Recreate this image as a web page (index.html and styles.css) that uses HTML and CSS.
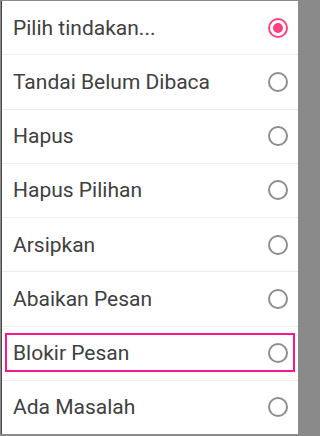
FILE: index.html
```html
<!DOCTYPE html>
<html>
<head>
<meta charset="utf-8">
<link rel="stylesheet" href="styles.css">
</head>
<body>
<div class="sheet">
  <div class="row"><span class="label">Pilih tindakan...</span><span class="radio on"></span></div>
  <div class="row"><span class="label">Tandai Belum Dibaca</span><span class="radio"></span></div>
  <div class="row"><span class="label">Hapus</span><span class="radio"></span></div>
  <div class="row"><span class="label">Hapus Pilihan</span><span class="radio"></span></div>
  <div class="row"><span class="label">Arsipkan</span><span class="radio"></span></div>
  <div class="row"><span class="label">Abaikan Pesan</span><span class="radio"></span></div>
  <div class="row marked"><span class="label">Blokir Pesan</span><span class="radio"></span><span class="mark"></span></div>
  <div class="row last"><span class="label">Ada Masalah</span><span class="radio"></span></div>
</div>
</body>
</html>
```
FILE: styles.css
```css
html, body {
  margin: 0;
  padding: 0;
}
body {
  width: 300px;
  height: 436px;
  background: #8a8a8a;
  overflow: hidden;
  font-family: Roboto, "Noto Sans", sans-serif;
}
.sheet {
  margin: 1px 2px 0 2px;
  height: 433px;
  background: #ffffff;
  display: flex;
  flex-direction: column;
  box-shadow: -1px 0 0 #4a4a4a;
}
.row {
  position: relative;
  flex: 1 1 0;
  display: flex;
  align-items: center;
  justify-content: space-between;
  padding: 0 10px 0 11px;
  border-bottom: 1px solid #eeeeee;
  box-sizing: border-box;
}
.row.last {
  border-bottom: none;
}
.label {
  font-size: 21px;
  color: #404040;
}
.radio {
  width: 20px;
  height: 20px;
  box-sizing: border-box;
  border: 2px solid #8e8e8e;
  border-radius: 50%;
  display: flex;
  align-items: center;
  justify-content: center;
}
.radio.on {
  border-color: #ff4081;
}
.radio.on::after {
  content: "";
  width: 10px;
  height: 10px;
  border-radius: 50%;
  background: #ff4081;
}
.mark {
  position: absolute;
  left: 3px;
  right: 3px;
  top: 6px;
  bottom: 8px;
  border: 2px solid #f5198a;
}
```
